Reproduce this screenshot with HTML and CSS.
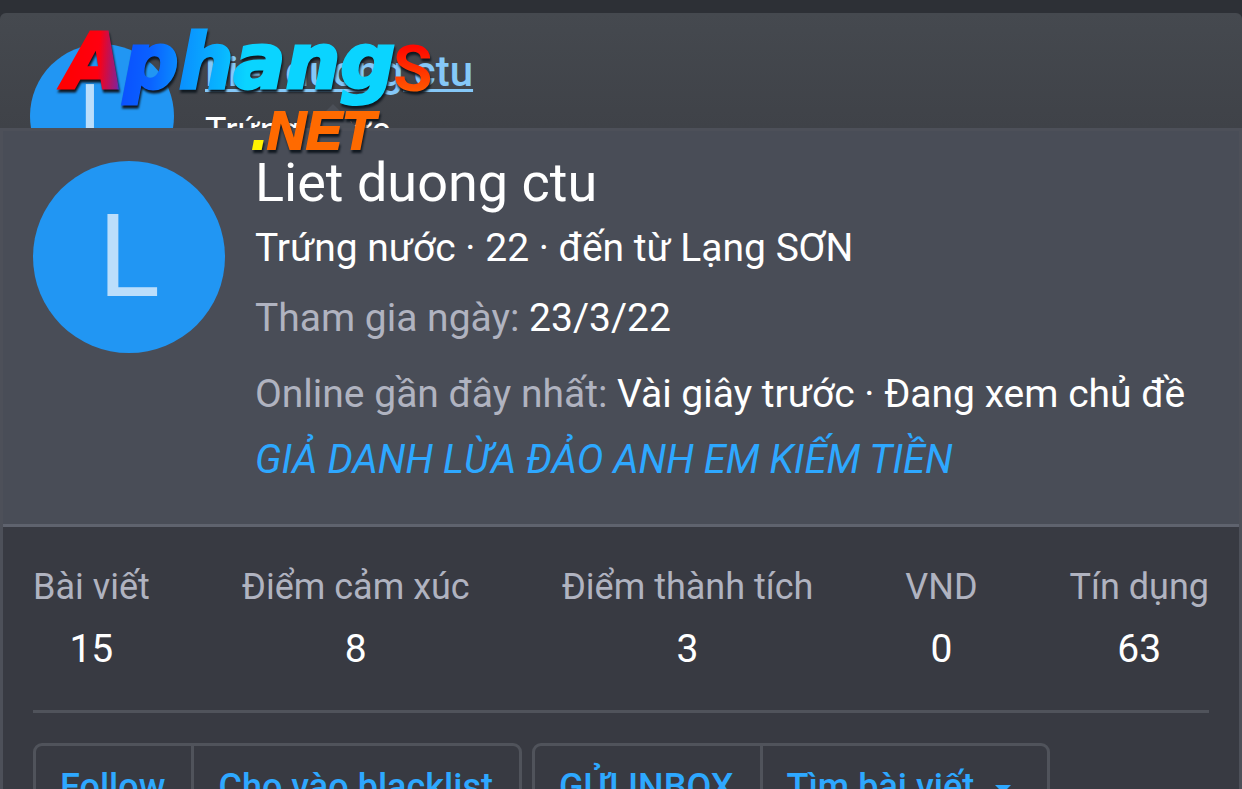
FILE: index.html
```html
<!DOCTYPE html>
<html lang="vi">
<head>
    <meta charset="UTF-8">
    <meta name="viewport" content="width=device-width, initial-scale=1.0">
    <title>Liet duong ctu</title>
    <link rel="stylesheet" href="styles.css">
</head>
<body>
    <!-- post author, mostly hidden by the member card -->
    <div class="post-user">
        <div class="avatar avatar-small">L</div>
        <div class="post-user-details">
            <a href="#" class="post-user-name">Liet duong ctu</a>
            <div class="post-user-title">Trứng nước</div>
        </div>
        <div class="card-arrow"></div>
    </div>

    <div class="member-card">
        <div class="card-header">
            <div class="avatar">L</div>
            <div class="card-info">
                <h1 class="card-name">Liet duong ctu</h1>
                <div class="card-title">Trứng nước · 22 · đến từ Lạng SƠN</div>
                <div class="card-joined"><span class="muted">Tham gia ngày:</span> 23/3/22</div>
                <div class="card-online"><span class="muted">Online gần đây nhất:</span> Vài giây trước · Đang xem chủ đề</div>
                <div class="card-banner">GIẢ DANH LỪA ĐẢO ANH EM KIẾM TIỀN</div>
            </div>
        </div>
        <div class="card-body">
            <dl class="stats">
                <div class="stat"><dt>Bài viết</dt><dd>15</dd></div>
                <div class="stat"><dt>Điểm cảm xúc</dt><dd>8</dd></div>
                <div class="stat"><dt>Điểm thành tích</dt><dd>3</dd></div>
                <div class="stat"><dt>VND</dt><dd>0</dd></div>
                <div class="stat"><dt>Tín dụng</dt><dd>63</dd></div>
            </dl>
            <hr class="divider">
            <div class="actions">
                <div class="btn-group">
                    <button type="button" class="btn">Follow</button>
                    <button type="button" class="btn">Cho vào blacklist</button>
                </div>
                <div class="btn-group">
                    <button type="button" class="btn">GỬI INBOX</button>
                    <button type="button" class="btn">Tìm bài viết <span class="caret"></span></button>
                </div>
            </div>
        </div>
    </div>

    <!-- site logo -->
    <svg class="logo" width="400" height="140" viewBox="0 0 400 140" role="img" aria-label="Aphangs.NET">
        <defs>
            <linearGradient id="word" gradientUnits="userSpaceOnUse" x1="10" y1="40" x2="340" y2="60">
                <stop offset="0" stop-color="#ff0000"/>
                <stop offset="0.11" stop-color="#ff0010"/>
                <stop offset="0.17" stop-color="#8a2090"/>
                <stop offset="0.18" stop-color="#0a50ff"/>
                <stop offset="0.27" stop-color="#0a62ff"/>
                <stop offset="0.36" stop-color="#0a90ff"/>
                <stop offset="0.48" stop-color="#08b4ff"/>
                <stop offset="0.56" stop-color="#0ad4ff"/>
                <stop offset="1" stop-color="#0ad4ff"/>
            </linearGradient>
            <linearGradient id="last" x1="0" y1="0" x2="0" y2="1">
                <stop offset="0.2" stop-color="#ff0800"/>
                <stop offset="0.8" stop-color="#ff5a00"/>
            </linearGradient>
        </defs>
        <text class="logo-word" x="12" y="68" fill="url(#word)" stroke="url(#word)">Aphang</text>
        <text class="logo-last" x="341" y="71" fill="url(#last)">S</text>
        <text class="logo-net" x="200" y="129"><tspan class="logo-dot">.</tspan>NET</text>
    </svg>
</body>
</html>
```
FILE: styles.css
```css
* {
    box-sizing: border-box;
}

body {
    margin: 0;
    padding-top: 13px;
    height: 100vh;
    overflow: hidden;
    background-color: #2d3036;
    color: #ffffff;
    font-family: Roboto, "Noto Sans", sans-serif;
    font-size: 39px;
    line-height: 50px;
}

.post-user {
    position: relative;
    display: flex;
    gap: 31px;
    height: 115px;
    padding: 31px 30px 0;
    overflow: hidden;
    border-radius: 6px 6px 0 0;
    background: linear-gradient(#45494f, #3f4248);
}

.avatar {
    flex: none;
    width: 192px;
    height: 192px;
    border-radius: 50%;
    background-color: #2196f3;
    color: #bbdefb;
    font-size: 115px;
    line-height: 192px;
    text-align: center;
}

.avatar-small {
    width: 144px;
    height: 144px;
    font-size: 86px;
    line-height: 144px;
}

.post-user-name {
    color: #85c8f8;
    font-size: 42px;
    font-weight: 500;
    line-height: 56px;
    text-decoration-thickness: 3px;
    text-underline-offset: 3px;
}

.post-user-title {
    font-size: 36px;
    line-height: 50px;
    margin-top: 6px;
}

.card-arrow {
    position: absolute;
    left: 309px;
    bottom: 0;
    border: 24px solid transparent;
    border-top: none;
    border-bottom-color: #4b4f57;
}

.member-card {
    border: 3px solid #4d5059;
    border-bottom: none;
    background-color: #383a42;
}

.card-header {
    display: flex;
    gap: 30px;
    padding: 30px 30px 39px;
    background-color: #494d57;
    border-bottom: 3px solid #5f636e;
}

.card-name {
    margin: 0;
    font-size: 54px;
    font-weight: 400;
    line-height: 44px;
}

.card-title {
    margin-top: 18px;
}

.card-joined {
    margin-top: 20px;
}

.card-online {
    margin-top: 26px;
    white-space: nowrap;
}

.card-banner {
    margin-top: 16px;
    color: #2ea8ff;
    font-size: 40px;
    font-style: italic;
}

.muted {
    color: #b0b3c0;
}

.card-body {
    padding: 37px 30px;
}

.stats {
    display: flex;
    justify-content: space-between;
    margin: 0;
    text-align: center;
}

.stat dt {
    color: #b0b3c0;
    font-size: 36px;
    line-height: 46px;
}

.stat dd {
    margin: 14px 0 0;
}

.divider {
    margin: 36px 0 30px;
    border: none;
    border-top: 3px solid #50535b;
}

.actions {
    display: flex;
    gap: 10px;
}

.btn-group {
    display: flex;
    border: 3px solid #50535b;
    border-radius: 9px;
}

.btn {
    padding: 18px 26px 18px 24px;
    border: none;
    background: none;
    color: #2ea8ff;
    font-family: inherit;
    font-size: 36px;
    font-weight: 500;
    line-height: 46px;
    white-space: nowrap;
    cursor: pointer;
}

.btn + .btn {
    border-left: 3px solid #50535b;
}

.caret {
    display: inline-block;
    margin: 0 10px 0 12px;
    vertical-align: middle;
    border: 8px solid transparent;
    border-top-color: #2ea8ff;
    border-bottom: none;
}

.logo {
    position: absolute;
    left: 52px;
    top: 20px;
    filter: drop-shadow(1px 3px 1px #101820);
}

.logo-word {
    font: italic bold 77px "DejaVu Sans", sans-serif;
    stroke-width: 3px;
}

.logo-last {
    font: bold 64px Roboto, sans-serif;
}

.logo-net {
    font: italic bold 54px "Liberation Sans", sans-serif;
    fill: #ff6a00;
    stroke: #ff6a00;
    stroke-width: 2px;
}

.logo-dot {
    fill: #fff200;
    stroke: #fff200;
}
```
